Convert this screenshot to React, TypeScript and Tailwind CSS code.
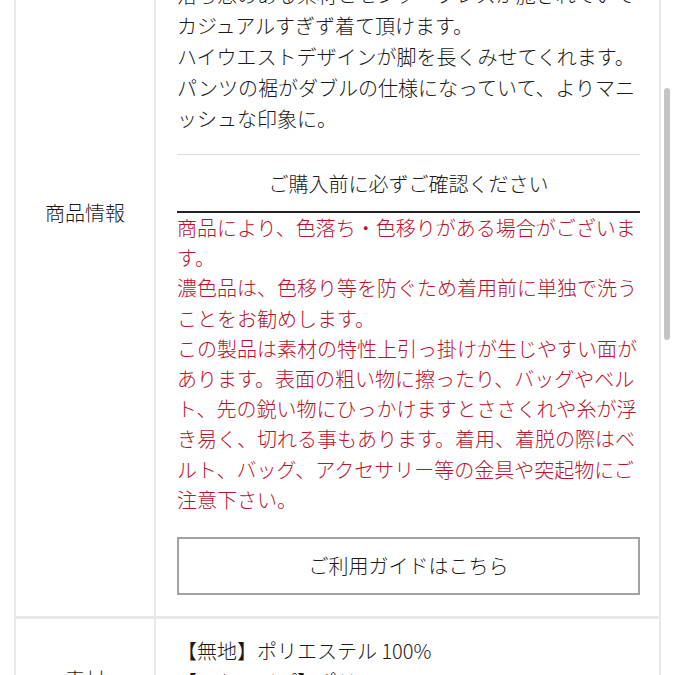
import React from "react";

const RED_LINES = [
  "商品により、色落ち・色移りがある場合がございま",
  "す。",
  "濃色品は、色移り等を防ぐため着用前に単独で洗う",
  "ことをお勧めします。",
  "この製品は素材の特性上引っ掛けが生じやすい面が",
  "あります。表面の粗い物に擦ったり、バッグやベル",
  "ト、先の鋭い物にひっかけますとささくれや糸が浮",
  "き易く、切れる事もあります。着用、着脱の際はベ",
  "ルト、バッグ、アクセサリー等の金具や突起物にご",
  "注意下さい。",
];

const DESC_LINES = [
  "きれいめにもカジュアルにも合わせやすいワイド",
  "シルエットのタックパンツ。",
  "ウエストはベルトループ付きで、後ろゴム仕様な",
  "のでストレスフリーな穿き心地です。",
  "ゆったりとしたシルエットながら、程よい",
  "落ち感のある素材とセンタープレスが施されていて",
  "カジュアルすぎず着て頂けます。",
  "ハイウエストデザインが脚を長くみせてくれます。",
  "パンツの裾がダブルの仕様になっていて、よりマニ",
  "ッシュな印象に。",
];

export default function App() {
  return (
    <div className="relative h-[675px] overflow-hidden bg-white font-['Noto_Sans_CJK_JP','Noto_Sans',sans-serif] font-light text-[20px] text-[#1a1a1a]">
      {/* 表 */}
      <div className="-mt-[190px] ml-[14px] w-[647px] border-x-2 border-[#e8e8e8]">
        {/* 商品情報 */}
        <div className="flex border-b-[3px] border-[#e8e8e8]">
          <div className="w-[140px] shrink-0 border-r-2 border-[#e8e8e8] flex items-center justify-center">
            商品情報
          </div>
          <div className="flex-1 pl-[21px] pr-[19px] pt-[13.5px] pb-[21px]">
            <p className="leading-[31px] whitespace-nowrap">
              {DESC_LINES.map((l, i) => (
                <span key={i} className="block">{l}</span>
              ))}
            </p>
            <div className="mt-[20px] h-px bg-[#dcdcdc]" />
            <p className="pt-[13px] text-center leading-[31px]">ご購入前に必ずご確認ください</p>
            <div className="mt-[12.5px] h-[2px] bg-[#222]" />
            <p className="leading-[30.2px] text-[#b8132c] whitespace-nowrap">
              {RED_LINES.map((l, i) => (
                <span key={i} className="block">{l}</span>
              ))}
            </p>
            <button className="mt-[22px] w-full h-[58px] border-2 border-[#a3a3a3] bg-white flex items-center justify-center">
              ご利用ガイドはこちら
            </button>
          </div>
        </div>

        {/* 素材 */}
        <div className="flex border-b-2 border-[#e8e8e8]">
          <div className="w-[140px] shrink-0 border-r-2 border-[#e8e8e8] flex items-center justify-center">
            素材
          </div>
          <div className="flex-1 pl-[21px] pr-[19px] pt-[15.5px] pb-[14px] leading-[31px]">
            <span className="block">【無地】ポリエステル 100%</span>
            <span className="block">【ストライプ】ポリエステル 91%、レーヨン 9%</span>
            <span className="block">【チェック】ポリエステル 100%</span>
          </div>
        </div>
      </div>

      {/* スクロールバー */}
      <div className="absolute left-[664px] top-[88px] w-[6px] h-[252px] rounded-full bg-[#c4c4c4]" />
    </div>
  );
}
